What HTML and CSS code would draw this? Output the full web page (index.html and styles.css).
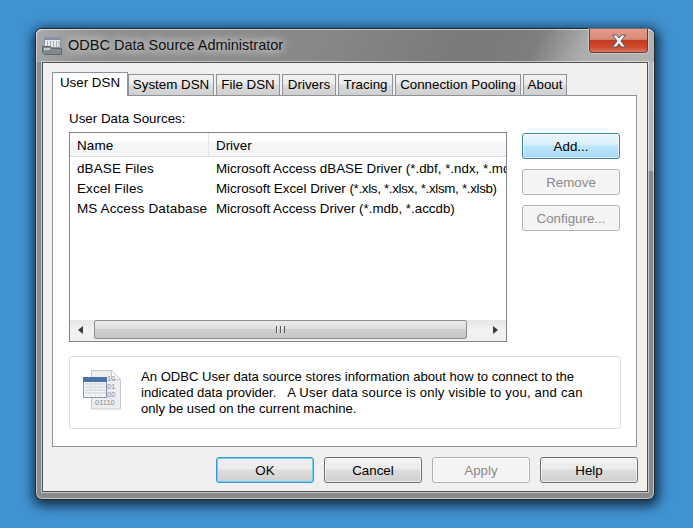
FILE: index.html
```html
<!DOCTYPE html>
<html lang="en">
<head>
    <meta charset="UTF-8">
    <meta name="viewport" content="width=device-width, initial-scale=1.0">
    <title>ODBC Data Source Administrator</title>
    <link rel="stylesheet" href="styles.css">
</head>
<body>
    <div class="window">
        <div class="titlebar">
            <svg class="app-icon" width="20" height="20" viewBox="0 0 20 20">
                <rect x="2.500" y="1.500" width="16" height="10" fill="#e8eaee" stroke="#8a94a4"/>
                <rect x="3" y="2" width="15" height="2" fill="#7f90ad"/>
                <path d="M5.500 5v6M8.500 5v6M11.500 5v6M14.500 5v6M17 5v6" stroke="#a4aab4"/>
                <path d="M0.500 10.500h8l2 2h9v6H2.500l-2-2z" fill="#7d8a90" stroke="#5d676c"/>
                <path d="M2 12h6v2H2z" fill="#c3cbd0"/>
            </svg>
            <span class="title">ODBC Data Source Administrator</span>
            <div class="close">
                <svg width="16" height="14" viewBox="0 0 16 14">
                    <path d="M1.500 1h4l2.500 3 2.500-3h4l-4.500 6 4.500 6h-4l-2.500-3.200L5.500 13h-4L6 7z" fill="#f1f1f1" stroke="#56606c"/>
                </svg>
            </div>
        </div>
        <div class="client">
            <div class="tabs">
                <div class="tab active">User DSN</div>
                <div class="tab w-system">System DSN</div>
                <div class="tab w-file">File DSN</div>
                <div class="tab w-drivers">Drivers</div>
                <div class="tab w-tracing">Tracing</div>
                <div class="tab w-pool">Connection Pooling</div>
                <div class="tab w-about">About</div>
            </div>
            <div class="panel">
                <div class="label">User Data Sources:</div>
                <div class="sources">
                    <div class="list">
                        <div class="list-head">
                            <div class="col-name">Name</div>
                            <div class="col-driver">Driver</div>
                        </div>
                        <div class="list-rows">
                            <div class="row"><div class="col-name">dBASE Files</div><div class="col-driver">Microsoft Access dBASE Driver (*.dbf, *.ndx, *.mdx)</div></div>
                            <div class="row"><div class="col-name">Excel Files</div><div class="col-driver">Microsoft Excel Driver <span class="tight">(*.xls, *.xlsx, *.xlsm, *.xlsb)</span></div></div>
                            <div class="row"><div class="col-name">MS Access Database</div><div class="col-driver">Microsoft Access Driver (*.mdb, *.accdb)</div></div>
                        </div>
                        <div class="scrollbar">
                            <div class="arrow arrow-left"></div>
                            <div class="thumb"><span class="grip"></span></div>
                            <div class="arrow arrow-right"></div>
                        </div>
                    </div>
                    <div class="side-buttons">
                        <button class="btn hot">Add...</button>
                        <button class="btn" disabled>Remove</button>
                        <button class="btn" disabled>Configure...</button>
                    </div>
                </div>
                <div class="info">
                    <svg class="info-icon" width="40" height="42" viewBox="0 0 40 42">
                        <path d="M8.500 1.500h20l9 9v29.500h-29z" fill="#eceef0" stroke="#c6c8cc"/>
                        <path d="M28.500 1.500v9h9z" fill="#fafafa" stroke="#c6c8cc"/>
                        <text x="24" y="12" class="bits">10</text>
                        <text x="24" y="20" class="bits">01</text>
                        <text x="24" y="28" class="bits">00</text>
                        <text x="12" y="36" class="bits">01110</text>
                        <rect x="0.500" y="8.500" width="23" height="20" fill="#f4f5f7" stroke="#8d96a3"/>
                        <rect x="0.500" y="8.500" width="23" height="4" fill="#4a74ae" stroke="#4a74ae"/>
                        <path d="M2 15h21M2 18h21M2 21h21M2 24h21" stroke="#c6cbd2"/>
                        <path d="M7.500 13v15M12.500 13v15M17.500 13v15" stroke="#dfe2e6"/>
                    </svg>
                    <p>An ODBC User data source stores information about how to connect to the indicated data provider.&nbsp;&nbsp; <span class="wide">A User data source is only visible to you, and can</span> only be used on the current machine.</p>
                </div>
            </div>
            <div class="footer">
                <button class="btn default">OK</button>
                <button class="btn">Cancel</button>
                <button class="btn" disabled>Apply</button>
                <button class="btn">Help</button>
            </div>
        </div>
    </div>
</body>
</html>
```

FILE: styles.css
```css
html, body {
    margin: 0;
    height: 100%;
}
body {
    background-color: #4192d1;
    font-family: "Liberation Sans", Arial, sans-serif;
    font-size: 13.35px;
    color: #000;
    padding: 28px 0 0 35px;
    box-sizing: border-box;
    overflow: hidden;
}
.window {
    width: 620px;
    height: 472px;
    box-sizing: border-box;
    border-radius: 7px;
    border: 1px solid #1c2a36;
    background-color: #8a8a8a;
    background-image: linear-gradient(#bdbdbd, #b2b2b2);
    background-size: 7px 142px;
    background-position: right top;
    background-repeat: no-repeat;
    box-shadow: 1px 3px 12px 3px rgba(8, 22, 38, 0.8), inset 0 0 0 1px rgba(255, 255, 255, 0.5);
}
.titlebar {
    height: 33px;
    display: flex;
    align-items: center;
    padding: 0 6px;
    border-radius: 6px 6px 0 0;
    background-image: linear-gradient(115deg, #ababab 0%, #8e8e8e 10%, #888888 45%, #797979 70%, #7e7e7e 80%, #adadad 88%, #b2b2b2 100%);
    box-shadow: inset 0 1px 0 rgba(255, 255, 255, 0.55), inset 1px 0 0 rgba(255, 255, 255, 0.5);
}
.app-icon {
    flex: none;
}
.title {
    font-size: 14.5px;
    margin-left: 6px;
    margin-bottom: 2px;
    color: #101010;
    text-shadow: 0 0 8px #d0d0d0, 0 0 10px #d0d0d0, 0 0 14px #d0d0d0;
}
.close {
    margin-left: auto;
    align-self: flex-start;
    width: 59px;
    height: 24px;
    box-sizing: border-box;
    display: flex;
    align-items: center;
    justify-content: center;
    border: 1px solid #6b3a34;
    border-top: none;
    border-radius: 0 0 4px 4px;
    background-image: linear-gradient(#e79a8a 0%, #d88a78 45%, #c23a1f 50%, #cf4a2c 80%, #d87a62 100%);
    box-shadow: 0 0 0 1px rgba(255, 255, 255, 0.35);
}
.client {
    height: 430px;
    margin: 0 6px;
    box-sizing: border-box;
    background-color: #f0f0f0;
    border: 1px solid #505050;
    box-shadow: 0 0 0 1px rgba(255, 255, 255, 0.5);
    padding: 9px 10px 0 9px;
}
.tabs {
    display: flex;
    align-items: flex-end;
    gap: 2px;
    height: 23px;
    position: relative;
    z-index: 1;
}
.tab {
    height: 21px;
    box-sizing: border-box;
    border: 1px solid #8e929a;
    border-bottom: none;
    background-image: linear-gradient(#f2f2f2 0%, #ebebeb 45%, #dcdcdc 50%, #cfcfcf 100%);
    text-align: center;
    line-height: 20px;
    white-space: nowrap;
}
.tab.active {
    width: 76px;
    height: 24px;
    margin-bottom: -1px;
    margin-right: -2px;
    background-image: none;
    background-color: #fff;
    line-height: 20px;
}
.w-system { width: 86px; }
.w-file { width: 64px; }
.w-drivers { width: 54px; }
.w-tracing { width: 55px; }
.w-pool { width: 126px; }
.w-about { width: 44px; }
.panel {
    width: 585px;
    height: 352px;
    box-sizing: border-box;
    background-color: #fff;
    border: 1px solid #8e929a;
    padding: 14px 15px 0 16px;
}
.label {
    height: 22px;
    line-height: 17px;
}
.sources {
    display: flex;
    gap: 15px;
}
.list {
    width: 438px;
    height: 210px;
    flex: none;
    box-sizing: border-box;
    border: 1px solid #82868e;
    display: flex;
    flex-direction: column;
}
.list-head {
    display: flex;
    height: 24px;
    background-image: linear-gradient(#fff 0%, #fff 30%, #f3f5f7 45%, #f3f5f7 100%);
    border-bottom: 1px solid #d8dbe0;
    line-height: 26px;
    flex: none;
    box-sizing: border-box;
}
.col-name {
    width: 139px;
    flex: none;
    padding-left: 7px;
    box-sizing: border-box;
    white-space: nowrap;
    font-size: 13.5px;
    letter-spacing: 0.1px;
}
.col-driver {
    padding-left: 7px;
    white-space: nowrap;
}
.tight {
    letter-spacing: -0.32px;
}
.list-head .col-name {
    border-right: 1px solid #e3e5e9;
}
.list-rows {
    flex: 1;
    overflow: hidden;
    padding-top: 2px;
}
.row {
    display: flex;
    height: 20px;
    line-height: 20px;
}
.scrollbar {
    height: 21px;
    flex: none;
    display: flex;
    align-items: flex-start;
    justify-content: space-between;
    background-image: linear-gradient(#e6e6e6, #f2f2f2 50%, #f0f0f0);
}
.arrow {
    width: 23px;
    height: 19px;
    flex: none;
    display: flex;
    align-items: center;
    justify-content: center;
}
.arrow-left {
    width: 24px;
}
.arrow::before {
    content: "";
    width: 0;
    height: 0;
    border-top: 4px solid transparent;
    border-bottom: 4px solid transparent;
}
.arrow-left::before {
    border-right: 5px solid #3c3c3c;
    margin-right: 4px;
}
.arrow-right::before {
    border-left: 5px solid #3c3c3c;
    margin-left: 2px;
}
.thumb {
    flex: 1;
    height: 19px;
    box-sizing: border-box;
    border: 1px solid #8e8e8e;
    border-radius: 2px;
    background-image: linear-gradient(#ececec 0%, #dedede 45%, #cfcfcf 50%, #c6c6c6 100%);
    display: flex;
    align-items: center;
    justify-content: center;
    margin: 0 16px 0 0;
}
.grip {
    width: 9px;
    height: 7px;
    background-image: repeating-linear-gradient(90deg, #555 0 1px, #eee 1px 2px, transparent 2px 4px);
}
.side-buttons {
    display: flex;
    flex-direction: column;
    gap: 10px;
    padding-top: 1px;
}
.btn {
    width: 98px;
    height: 26px;
    box-sizing: border-box;
    padding: 0;
    font-family: inherit;
    font-size: 13.35px;
    color: #000;
    border: 1px solid #707070;
    border-radius: 3px;
    background-image: linear-gradient(#f2f2f2 0%, #ebebeb 45%, #dddddd 50%, #cfcfcf 100%);
    box-shadow: inset 0 0 0 1px rgba(255, 255, 255, 0.6);
}
.btn:disabled {
    color: #8a8a8a;
    border-color: #adb2b5;
    background-image: none;
    background-color: #f4f4f4;
}
.btn.hot {
    border-color: #3c7fb1;
    background-image: linear-gradient(#eaf6fd 0%, #d9f0fc 45%, #bee6fd 50%, #a7d9f5 100%);
}
.btn.default {
    border-color: #3399d0;
    box-shadow: inset 0 0 0 1px #6fd0f2;
}
.info {
    width: 552px;
    height: 73px;
    box-sizing: border-box;
    margin-top: 14px;
    border: 1px solid #d9e0e6;
    border-radius: 3px;
    display: flex;
    padding: 12px 20px 0 13px;
}
.info-icon {
    flex: none;
}
.bits {
    font-size: 7.5px;
    fill: #8d8d8d;
}
.info p {
    margin: 0 0 0 18px;
    width: 445px;
    line-height: 16px;
    font-size: 13.1px;
}
.wide {
    letter-spacing: 0.2px;
}
.footer {
    display: flex;
    justify-content: flex-end;
    gap: 10px;
    padding: 10px 0 0 0;
    width: 586px;
}
```
